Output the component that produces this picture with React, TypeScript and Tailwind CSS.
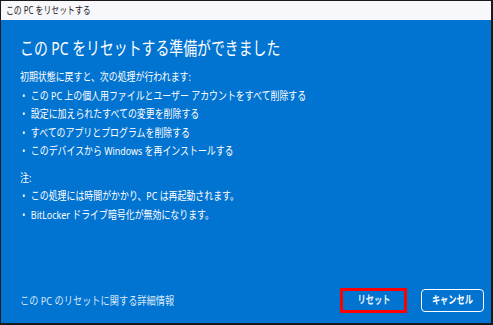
const items1 = [
  "この PC 上の個人用ファイルとユーザー アカウントをすべて削除する",
  "設定に加えられたすべての変更を削除する",
  "すべてのアプリとプログラムを削除する",
  "このデバイスから Windows を再インストールする",
];

const items2 = [
  "この処理には時間がかかり、PC は再起動されます。",
  "BitLocker ドライブ暗号化が無効になります。",
];

function BulletList({ items }: { items: string[] }) {
  return (
    <ul className="flex flex-col">
      {items.map((t) => (
        <li key={t} className="flex h-[18.5px] items-center whitespace-nowrap">
          <span className="w-[14px] pl-[3px] text-[10px]">•</span>
          <span>{t}</span>
        </li>
      ))}
    </ul>
  );
}

export default function App() {
  return (
    <div
      className="flex h-[325px] w-[493px] flex-col overflow-hidden border border-r-2 border-b-2 border-[#1a1a1a] bg-[#0173d1] text-white"
      style={{ fontFamily: '"Noto Sans", "Noto Sans CJK JP", sans-serif' }}
    >
      <div className="flex h-[19px] items-center bg-[#f8f8fc] pl-[5px] text-[10.5px] text-[#1a1a1a]">
        <span className="origin-left scale-x-[0.75] whitespace-nowrap">
          この PC をリセットする
        </span>
      </div>

      <div className="flex flex-1 flex-col pl-[19px] pr-[7px]">
        <h1 className="mt-[14px] origin-left scale-x-[0.75] whitespace-nowrap text-[18.5px] leading-[28px] font-normal">
          この PC をリセットする準備ができました
        </h1>

        <div className="mt-[6px] origin-left scale-x-[0.775] text-[11.5px] leading-[18.5px]">
          <p>初期状態に戻すと、次の処理が行われます:</p>
          <BulletList items={items1} />
          <p className="mt-[8px]">注:</p>
          <BulletList items={items2} />
        </div>

        <div className="mt-auto mb-[10px] flex items-center justify-between">
          <span className="origin-left scale-x-[0.8] whitespace-nowrap text-[11.5px] text-[#d6e8f8]">
            この PC のリセットに関する詳細情報
          </span>
          <div className="flex items-center gap-[14px]">
            <button className="flex h-[25px] w-[67px] items-center justify-center border-[3px] border-[#ff0000] bg-[#0173d1] text-[11px] font-bold text-[#e8f1fa]">
              <span className="scale-x-[0.75] whitespace-nowrap">リセット</span>
            </button>
            <button className="flex h-[23px] w-[63px] items-center justify-center rounded-[4px] border-[1.5px] border-white bg-[#0173d1] text-[11px] font-bold text-white">
              <span className="scale-x-[0.75] whitespace-nowrap">キャンセル</span>
            </button>
          </div>
        </div>
      </div>
    </div>
  );
}
